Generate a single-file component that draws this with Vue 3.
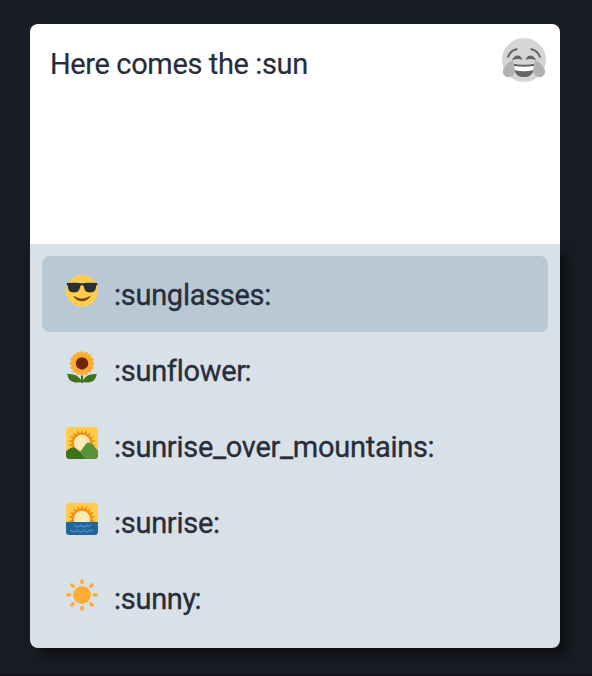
<script setup>
import { ref } from 'vue'

const message = ref('Here comes the :sun')
const suggestions = ['sunglasses', 'sunflower', 'sunrise_over_mountains', 'sunrise', 'sunny']
const selected = ref(0)
const petals = Array.from({ length: 16 }, (_, i) => i * 22.5)
const rays = Array.from({ length: 8 }, (_, i) => i * 45)
const dawnRays = Array.from({ length: 13 }, (_, i) => -120 + i * 20)
const isTight = (name) => /[ry]$/.test(name)
</script>

<template>
  <main class="page">
    <section class="composer">
      <div class="editor">
        <div class="message">{{ message }}</div>
        <svg class="picker" viewBox="0 0 36 36">
          <circle cx="18" cy="18" r="18" fill="#d5d5d5" />
          <path d="M5 15.2Q7 10.2 12 9.2M31 15.2Q29 10.2 24 9.2" fill="none" stroke="#656565" stroke-width="1.7" stroke-linecap="round" />
          <path d="M8.200 18.400C9.200 15.400 10.800 14.300 12.600 14.300s3.400 1.100 4.200 3.700c-1.300-.7-2.500-.9-4.200-.9-1.900 0-3.100.4-4.400 1.300ZM19.200 18c.8-2.600 2.400-3.700 4.200-3.700s3.400 1.100 4.400 4.100c-1.300-.9-2.500-1.300-4.400-1.300-1.700 0-2.900.2-4.200.9Z" fill="#656565" />
          <path d="M9.500 21q8.500 1.600 17 0c.5 6-2.300 11-8.500 11s-9-5-8.500-11Z" fill="#656565" />
          <path d="M9.800 23q8.200 1.200 16.400 0c.3 2-.3 3.200-1.400 3.600q-6.800 1.200-13.600 0c-1.100-.4-1.700-1.600-1.400-3.600Z" fill="#fff" />
          <path d="M8.600 18.400C4.800 20 .8 24.200.7 27.700.7 30.500 3 32.200 5.500 32c3.400-.2 4.800-2.700 4.800-5.800 0-2.700-.7-5.500-1.700-7.800ZM27.400 18.400c3.800 1.600 7.800 5.800 7.900 9.300 0 2.800-2.300 4.500-4.800 4.300-3.400-.2-4.800-2.700-4.800-5.800 0-2.700.7-5.500 1.700-7.800Z" fill="#b1b1b1" />
        </svg>
      </div>
      <ul class="suggestions">
        <li v-for="(name, index) in suggestions" :key="name" class="option" :class="{ selected: index === selected }">
          <svg class="emoji" viewBox="0 0 36 36">
            <template v-if="name === 'sunglasses'">
              <circle cx="18" cy="18" r="18" fill="#ffcc4d" />
              <path d="M27.335 23.629c-.178-.161-.444-.171-.635-.029-.039.029-3.922 2.900-8.700 2.900-4.766 0-8.662-2.871-8.700-2.900-.191-.142-.457-.13-.635.029-.177.16-.217.424-.094.628C8.700 24.472 11.788 29.500 18 29.500s9.301-5.028 9.429-5.243c.123-.205.084-.468-.094-.628Z" fill="#664500" />
              <path d="M1 9Q5 8.500 10 8.700c3.600.1 5.800.6 8 .6s4.400-.5 8-.6q5-.2 9 .3c.4.1.4 1.700 0 2-.9.500-1 1.200-1.300 3.200-.7 3.900-2.100 5.400-6.500 5.400-4.800 0-5.900-1.900-6.900-5.500-.5-1.900-.8-2.500-2.300-2.500s-1.800.6-2.300 2.500c-1 3.600-2.100 5.500-6.900 5.500-4.400 0-5.800-1.500-6.500-5.400C2 12.200 1.900 11.500 1 11c-.4-.3-.4-1.900 0-2Z" fill="#292f33" />
            </template>
            <template v-else-if="name === 'sunflower'">
              <path d="M16.800 25h2.400v11h-2.400Z" fill="#3e721d" />
              <path d="M18.200 35C14 36 7.500 35.800 4.500 33 2 30.800 2.500 27.500 1 26c5-.4 9.500.4 12.800 3.200 2.200 1.800 3.400 4 4.400 5.800Z" fill="#3e721d" />
              <path d="M18 35c4.200 1 10.500.8 13.500-2 2.500-2.200 2-5.500 3.500-7-5-.4-9.500.4-12.800 3.200C20 31 19 33.200 18 35Z" fill="#3e721d" />
              <g fill="#ffac33">
                <circle cx="18" cy="14" r="12" />
                <ellipse v-for="angle in petals" :key="angle" cx="18" cy="3" rx="2.200" ry="3" :transform="`rotate(${angle} 18 14)`" />
              </g>
              <circle cx="18" cy="14" r="7" fill="#732700" />
            </template>
            <template v-else-if="name === 'sunny'">
              <g fill="#ffac33">
                <circle cx="18" cy="18" r="10" />
                <rect v-for="angle in rays" :key="angle" x="16" y="0" width="4" height="6" rx="2" :transform="`rotate(${angle} 18 18)`" />
              </g>
            </template>
            <template v-else>
              <rect width="36" height="36" rx="4" fill="#ffcc4d" />
              <circle cx="18" cy="18" r="11.500" fill="#f4900c" />
              <path v-for="angle in dawnRays" :key="angle" d="M15.900 8 18 2.500 20.100 8Z" fill="#f4900c" :transform="`rotate(${angle} 18 18)`" />
              <circle cx="18" cy="18" r="9.200" fill="#ffe8b6" />
              <template v-if="name === 'sunrise'">
                <path d="M0 21.500h36V32a4 4 0 0 1-4 4H4a4 4 0 0 1-4-4Z" fill="#226699" />
                <path d="M9.500 24.800q2.700 3.400 5.700 1.200l1.600-1.200q2.700 3.400 5.600 1.200l1.300-1.200q2 2.500 3.800 0M5.500 30.500q2.700 3.400 5.700 1.200l1.600-1.200q2.700 3.400 5.600 1.200l1.600-1.200q2.700 3.400 5.600 1.200l1.400-1.200q2 1.800 3.500 0" fill="none" stroke="#4289c1" stroke-width="1.700" stroke-linecap="round" stroke-linejoin="round" />
              </template>
              <template v-else>
                <path d="M11 36c3-4.500 7.500-12 11-16.500 1.900-2.400 4.200-2.500 6.300-.9C30.500 20.200 34 24 36 27v5a4 4 0 0 1-4 4Z" fill="#5c913b" />
                <path d="M0 27.500c2.300-1.900 4.200-3.400 6.500-4.300 1.700-.6 3.300-.1 4.800 1.100 3.500 2.900 7 7 10.200 11.700H4a4 4 0 0 1-4-4Z" fill="#3e721d" />
              </template>
            </template>
          </svg>
          <span class="code">:{{ name }}<span :class="{ tight: isTight(name) }">:</span></span>
        </li>
      </ul>
    </section>
  </main>
</template>

<style>
body {
  background: #191c24;
}
</style>

<style scoped>
.page {
  box-sizing: border-box;
  height: 676px;
  padding: 24px 32px 27px 30px;
  border-bottom: 1px solid #17101a;
  overflow: hidden;
  font-family: Roboto, sans-serif;
  font-size: 29px;
  color: #282d39;
}
.composer {
  width: 530px;
  height: 624px;
  border-radius: 8px;
}
.editor {
  box-sizing: border-box;
  display: flex;
  justify-content: space-between;
  align-items: flex-start;
  height: 220px;
  padding: 14px 14px 0 20px;
  border-radius: 8px 8px 0 0;
  background: #fff;
}
.message {
  padding-top: 6px;
  line-height: 40px;
  letter-spacing: -0.37px;
  -webkit-text-stroke: 0.2px #282d39;
}
.picker {
  width: 44px;
  height: 44px;
}
.suggestions {
  box-sizing: border-box;
  height: 404px;
  margin: 0;
  padding: 12px;
  list-style: none;
  background: #d9e1e8;
  border-radius: 0 0 8px 8px;
  box-shadow: 8px 8px 12px rgba(0, 0, 0, 0.4);
}
.option {
  box-sizing: border-box;
  display: flex;
  align-items: center;
  height: 76px;
  padding: 0 24px;
  border-radius: 8px;
}
.option.selected {
  background: #b9c8d5;
}
.emoji {
  flex: none;
  width: 32px;
  height: 32px;
  margin: 0 16px 6px 0;
}
.code {
  padding-top: 2px;
  line-height: 40px;
  letter-spacing: -0.28px;
  -webkit-text-stroke: 0.35px #282d39;
}
.tight {
  margin-left: -1.5px;
}
</style>
